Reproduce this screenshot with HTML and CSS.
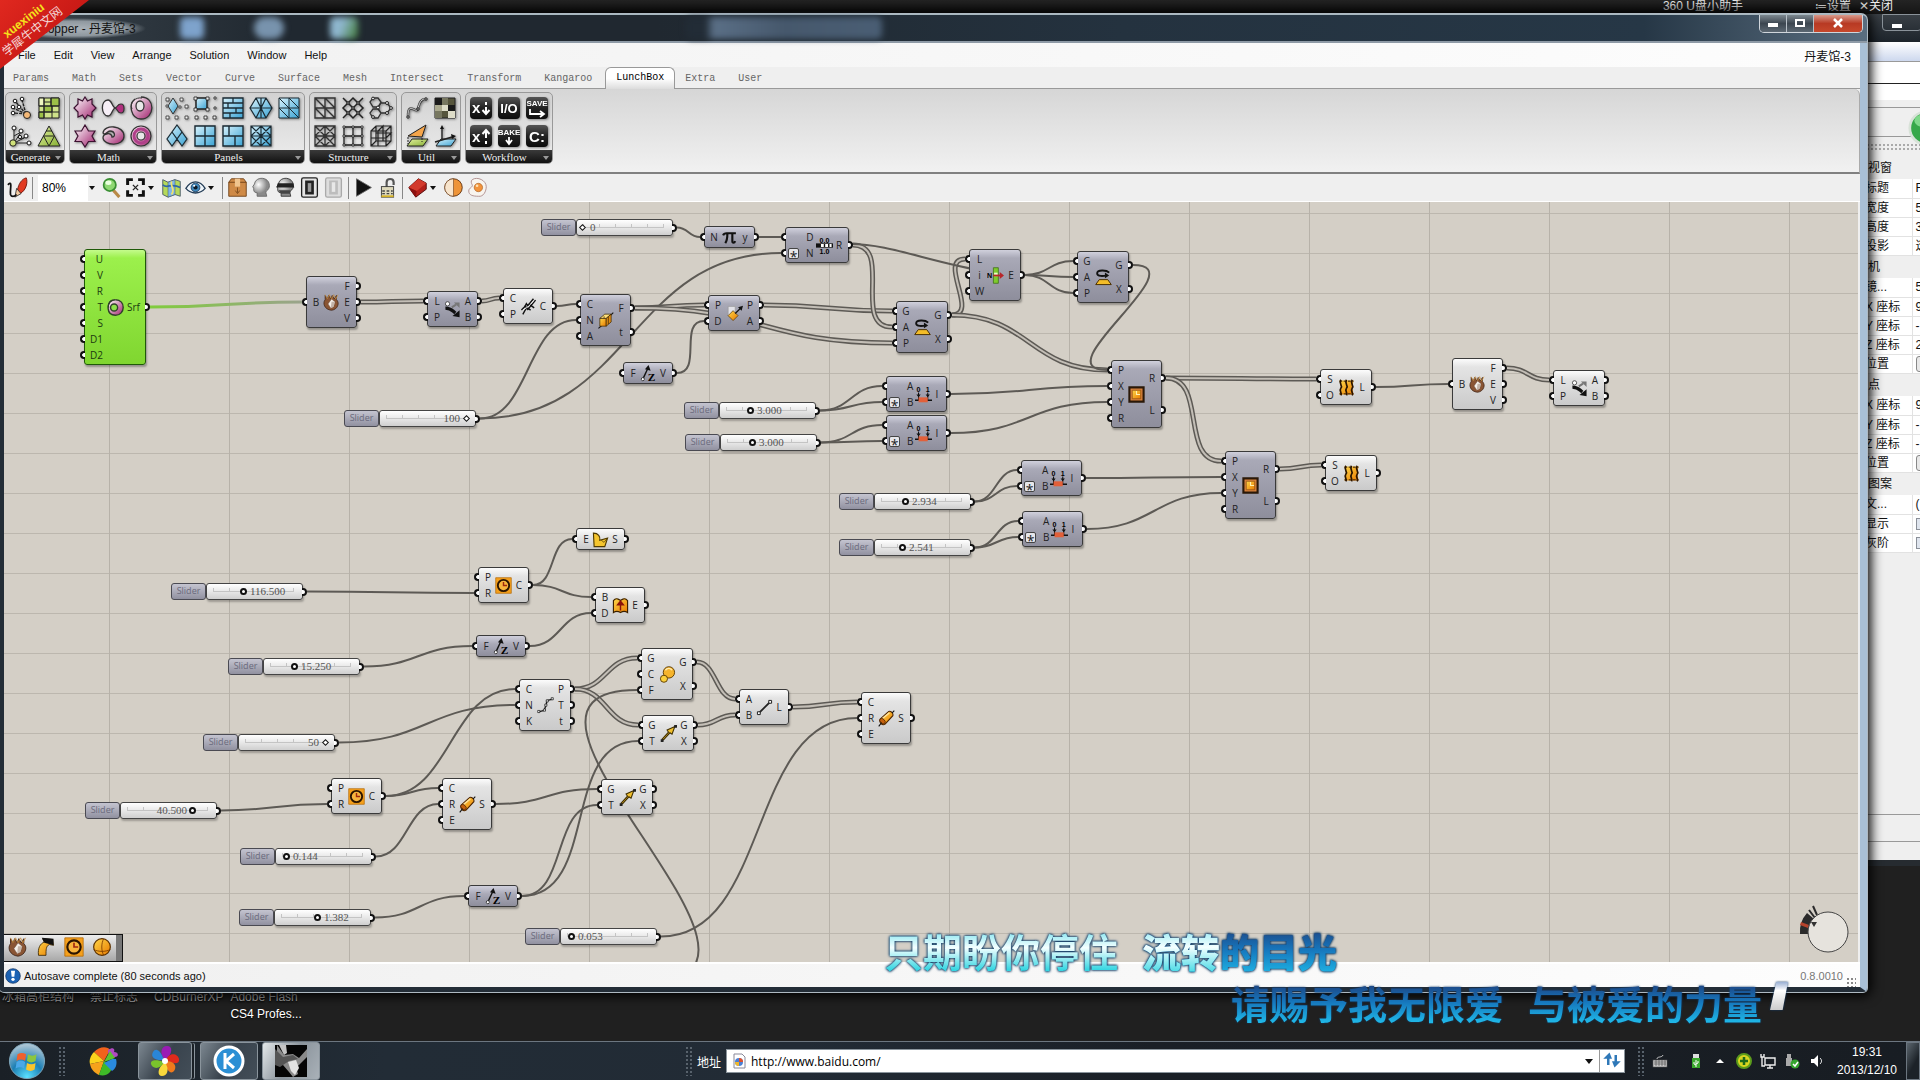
FILE: index.html
```html
<!DOCTYPE html>
<html lang="zh-CN">
<head>
  <meta charset="UTF-8">
  <meta name="viewport" content="width=device-width, initial-scale=1.0">
  <title>Grasshopper - 丹麦馆-3</title>
  <link rel="stylesheet" href="styles.css">
</head>
<body>
  <!-- Icon sprite -->
  <svg class="sprite" aria-hidden="true">
    <defs>
      <linearGradient id="gPink" x1="0" y1="0" x2="1" y2="1"><stop offset="0" stop-color="#fff"/><stop offset="1" stop-color="#a0206c"/></linearGradient>
      <linearGradient id="gBlue" x1="0" y1="0" x2="1" y2="1"><stop offset="0" stop-color="#d8f2fc"/><stop offset="1" stop-color="#3aa3d4"/></linearGradient>
      <linearGradient id="gGreen" x1="0" y1="0" x2="1" y2="1"><stop offset="0" stop-color="#e4f0a0"/><stop offset="1" stop-color="#86b034"/></linearGradient>
      <linearGradient id="gOrange" x1="0" y1="0" x2="1" y2="1"><stop offset="0" stop-color="#ffd84a"/><stop offset="1" stop-color="#e87a00"/></linearGradient>
      <linearGradient id="gBlack" x1="0" y1="0" x2="0" y2="1"><stop offset="0" stop-color="#555"/><stop offset=".5" stop-color="#222"/><stop offset="1" stop-color="#0c0c0c"/></linearGradient>
      <radialGradient id="gHead" cx=".35" cy=".35"><stop offset="0" stop-color="#fff"/><stop offset="1" stop-color="#8a8a8a"/></radialGradient>
      <radialGradient id="gOrb" cx=".5" cy=".95" r=".9"><stop offset="0" stop-color="#5be2ff"/><stop offset=".5" stop-color="#1c7fb4"/><stop offset="1" stop-color="#a9c4d4"/></radialGradient>
    </defs>

    <!-- Generate -->
    <symbol id="i-gen1" viewBox="0 0 24 24"><path d="M17 18L6 5M17 18L13 4M17 18L4 12M17 18L5 17" stroke="#222" stroke-width="1.400" stroke-dasharray="3 1" fill="none"/><g fill="#fff" stroke="#111"><circle cx="6" cy="5" r="1.800"/><circle cx="13" cy="3" r="1.800"/><circle cx="4" cy="11" r="1.800"/><circle cx="4" cy="17" r="1.800"/><circle cx="10" cy="11" r="1.800"/></g><circle cx="18" cy="19" r="3.500" fill="#f4b877" stroke="#222"/></symbol>
    <symbol id="i-gen2" viewBox="0 0 24 24"><g stroke="#222"><path fill="#cfe28a" d="M2 2h20v20H2z"/><path fill="#9cc048" d="M14 2h8v8h-8zM7 10h8v6H7zM2 16h5v6H2z"/><path fill="#eef6c0" d="M2 2h5v8H2z"/><path fill="none" d="M7 2v20M14 2v8M2 10h20M15 10v12M2 16h20M7 6h7"/></g></symbol>
    <symbol id="i-gen3" viewBox="0 0 24 24"><path d="M5 19L5 4M5 19L12 8M5 19L19 12M5 19L20 19M5 12l7-4M12 15l7-3" stroke="#222" fill="none"/><g fill="#fff" stroke="#111"><circle cx="5" cy="4" r="2"/><circle cx="12" cy="7" r="2"/><circle cx="17" cy="12" r="2"/><circle cx="20" cy="19" r="2"/><circle cx="11" cy="13" r="1.600"/></g><circle cx="4" cy="19" r="3.200" fill="#cfe07a" stroke="#222"/></symbol>
    <symbol id="i-gen4" viewBox="0 0 24 24"><path d="M12 2L23 22H1z" fill="url(#gGreen)" stroke="#222"/><path d="M6.500 12h11L12 22zM9 7h6" fill="none" stroke="#222"/></symbol>
    <!-- Math -->
    <symbol id="i-math1" viewBox="0 0 24 24"><path d="M12 1l2.500 4L19 3v5l4 4-4 4v5l-4.500-2L12 23l-2.500-4L5 21v-5l-4-4 4-4V3l4.500 2z" fill="url(#gPink)" stroke="#3c1030" stroke-width="1.200"/></symbol>
    <symbol id="i-math2" viewBox="0 0 24 24"><path d="M14 12c-3-1-3-8-7-8-8 0-7 16 0 16 4 0 4-7 7-8z" fill="#f6eef6" stroke="#333" stroke-width="1.300"/><path d="M14 12c3-1 2-4 6-4s4 9 0 9-3-4-6-5z" fill="#b0307e" stroke="#333" stroke-width="1.200"/></symbol>
    <symbol id="i-math3" viewBox="0 0 24 24"><path d="M12 1c15 0 14 22 0 22C2 23-1 8 6 3" fill="url(#gPink)" stroke="#333" stroke-width="1.300"/><path d="M3 13C0 6 7 1 13 2" fill="none" stroke="#333"/><ellipse cx="11" cy="10" rx="4" ry="5" fill="#e8e8e8" stroke="#333" stroke-width="1.300"/></symbol>
    <symbol id="i-math4" viewBox="0 0 24 24"><path d="M12 1l3.500 6h6.500l-3 5 3 5.500h-6.500L12 23l-3.500-5.500H2L5 12 2 7h6.500z" fill="url(#gPink)" stroke="#3c1030" stroke-width="1.200"/></symbol>
    <symbol id="i-math5" viewBox="0 0 24 24"><path d="M2 9C3 0 23 1 23 12S3 22 2 14c0-5 9-6 9-1 4 0 3-6-2-6-3 0-5 5-7 2z" fill="url(#gPink)" stroke="#333" stroke-width="1.300"/></symbol>
    <symbol id="i-math6" viewBox="0 0 24 24"><circle cx="12" cy="12" r="10" fill="url(#gPink)" stroke="#333" stroke-width="1.200"/><circle cx="12" cy="12" r="7" fill="none" stroke="#b0408a" stroke-width="3"/><circle cx="12" cy="12" r="4" fill="#e8e8e8" stroke="#333" stroke-width="1.200"/></symbol>
    <!-- Panels -->
    <symbol id="i-pan1" viewBox="0 0 24 24"><path d="M8 2l5 8-5 8-5-8z" fill="url(#gBlue)" stroke="#333"/><path d="M1 2h3v3H1zM15 2h3v3h-3zM20 9h3v3h-3zM1 20h3v3H1zM10 20h3v3h-3zM20 20h3v3h-3zM1 9h2v2H1zM14 10h2v2h-2z" fill="#eee" stroke="#333" stroke-width=".8"/></symbol>
    <symbol id="i-pan2" viewBox="0 0 24 24"><path d="M3 2h11v11H3z" fill="url(#gBlue)" stroke="#222" stroke-width="1.500"/><path d="M1 1h3v3H1zM13 1h3v3h-3zM1 12h3v3H1zM13 12h3v3h-3zM21 1h2v2h-2zM21 11h2v2h-2zM2 20h3v3H2zM11 20h3v3h-3zM20 20h3v3h-3z" fill="#eee" stroke="#222" stroke-width=".8"/></symbol>
    <symbol id="i-pan3" viewBox="0 0 24 24"><path d="M2 2h20v20H2z" fill="url(#gBlue)"/><path d="M2 2h20v20H2zM2 7h20M2 12h20M2 17h20M12 2v5M7 7v5M15 12v5M9 17v5" fill="none" stroke="#1a2a33" stroke-width="1.300"/></symbol>
    <symbol id="i-pan4" viewBox="0 0 24 24"><path d="M7 2h10l6 10-6 10H7L1 12z" fill="url(#gBlue)"/><path d="M7 2h10l6 10-6 10H7L1 12zM1 12h22M7 2l10 20M17 2L7 22M12 2v20" fill="none" stroke="#1a2a33" stroke-width="1.200"/></symbol>
    <symbol id="i-pan5" viewBox="0 0 24 24"><path d="M2 2h20v20H2z" fill="url(#gBlue)"/><path d="M2 2h20v20H2zM12 2v20M2 2l20 20M2 12l10 10M12 2l10 10M2 12h20" fill="none" stroke="#1a2a33"/></symbol>
    <symbol id="i-pan6" viewBox="0 0 24 24"><path d="M12 1l5 7 5 6-5 8-5-7-5 7-5-8 5-6z" fill="url(#gBlue)"/><path d="M12 1l5 7-5 7-5-7zM7 8l5 7-5 7-5-7zM17 8l5 7-5 7-5-7z" fill="none" stroke="#1a2a33" stroke-width="1.200"/></symbol>
    <symbol id="i-pan7" viewBox="0 0 24 24"><path d="M2 2h20v20H2z" fill="url(#gBlue)"/><path d="M2 2h20v20H2zM12 2v20M2 12h20" fill="none" stroke="#1a2a33" stroke-width="1.400"/></symbol>
    <symbol id="i-pan8" viewBox="0 0 24 24"><path d="M2 2h20v20H2z" fill="url(#gBlue)"/><path d="M2 2h20v20H2zM8 2v10M2 12h20M14 12v10" fill="none" stroke="#1a2a33" stroke-width="1.400"/></symbol>
    <symbol id="i-pan9" viewBox="0 0 24 24"><path d="M2 2h20v20H2z" fill="url(#gBlue)"/><path d="M2 2h20v20H2zM12 2v20M2 12h20M2 2l20 20M22 2L2 22M12 2l10 10-10 10L2 12z" fill="none" stroke="#1a2a33" stroke-width="1.200"/></symbol>
    <!-- Structure -->
    <symbol id="i-str1" viewBox="0 0 24 24"><path d="M2 2h20v20H2zM12 2v20M2 12h20M2 2l20 20M2 12l10 10M12 2l10 10" fill="none" stroke="#333" stroke-width="1.400"/></symbol>
    <symbol id="i-str2" viewBox="0 0 24 24"><path d="M2 2l20 20M22 2L2 22M12 2l10 10-10 10L2 12z" fill="none" stroke="#222" stroke-width="1.500"/><path d="M6 6h2v2H6zM16 6h2v2h-2zM11 11h2v2h-2zM6 16h2v2H6zM16 16h2v2h-2z" fill="#eee" stroke="#222"/></symbol>
    <symbol id="i-str3" viewBox="0 0 24 24"><path d="M4 2h5l3 4-3 5H4L1 6zM12 7h6l4 5-4 5h-6l-3-5zM4 13h5l3 4-3 5H4l-3-5z" fill="none" stroke="#333" stroke-width="1.300"/><g fill="#eee" stroke="#222"><circle cx="4" cy="2.500" r="1.400"/><circle cx="9" cy="11.500" r="1.500"/><circle cx="18" cy="7" r="1.500"/><circle cx="22" cy="12" r="1.400"/><circle cx="4" cy="21" r="1.400"/><circle cx="18" cy="17" r="1.500"/></g></symbol>
    <symbol id="i-str4" viewBox="0 0 24 24"><path d="M2 2h20v20H2zM12 2v20M2 12h20M2 2l20 20M22 2L2 22M12 2l10 10-10 10L2 12z" fill="none" stroke="#333" stroke-width="1.300"/></symbol>
    <symbol id="i-str5" viewBox="0 0 24 24"><path d="M3 3h18v18H3zM12 3v18M3 12h18" fill="none" stroke="#222" stroke-width="1.300"/><path d="M2 2h2v2H2zM11 2h2v2h-2zM20 2h2v2h-2zM2 11h2v2H2zM11 11h2v2h-2zM20 11h2v2h-2zM2 20h2v2H2zM11 20h2v2h-2zM20 20h2v2h-2z" fill="#eee" stroke="#222" stroke-width=".8"/></symbol>
    <symbol id="i-str6" viewBox="0 0 24 24"><path d="M2 7h15v15H2zM9 7v15M2 14h15M2 7l5-5h15v15l-5 5M17 7l5-5M9 7l5-5v15M17 14l5-5H7V2M7 9v8h15M2 22l5-5" fill="none" stroke="#222" stroke-width="1.200"/></symbol>
    <!-- Util -->
    <symbol id="i-utl1" viewBox="0 0 24 24"><path d="M3 20c0-14 7-4 9-6s2-12 9-11" fill="none" stroke="#444" stroke-width="2.500"/><path d="M3 20c0-14 7-4 9-6s2-12 9-11" fill="none" stroke="#eee" stroke-width=".8"/><path d="M2 20h2v2H2zM20 2h2v2h-2zM12 12h2v2h-2z" fill="#fff" stroke="#222"/></symbol>
    <symbol id="i-utl2" viewBox="0 0 24 24"><path d="M2 2h20v20H2z" fill="#56553c" stroke="#222"/><path d="M2 2h7v7H2zM15 9h7v6h-7z" fill="#1a1a1a"/><path d="M9 2h6v7H9zM2 15h7v7H2z" fill="#777760"/><path d="M9 9h6v6H9zM15 15h7v7h-7z" fill="#dddcc8"/><path d="M2 9h7v6H2z" fill="#aaa98e"/></symbol>
    <symbol id="i-utl3" viewBox="0 0 24 24"><path d="M2 22l5-7h16l-5 7z" fill="url(#gGreen)" stroke="#222"/><path d="M3 12L21 1l-4 12z" fill="#f5a54a" stroke="#222"/><path d="M3 13v7M17 14v4" stroke="#222" stroke-dasharray="2 1"/></symbol>
    <symbol id="i-utl4" viewBox="0 0 24 24"><path d="M3 22l5-7h15l-5 7z" fill="url(#gBlue)" stroke="#222"/><path d="M9 16V4M9 16l10-3M9 16l-7 2" fill="none" stroke="#222" stroke-width="1.400"/><path d="M7 5l2-4 2 4zM18 10l5 2-4 3z" fill="#111"/></symbol>
    <!-- Workflow -->
    <symbol id="i-wf1" viewBox="0 0 24 24"><rect x="1" y="1" width="22" height="22" rx="4" fill="url(#gBlack)"/><text x="3" y="17" class="wf-text wf-big">x</text><path d="M17 6v3M17 11v6M13.500 14l3.500 4 3.500-4" fill="none" stroke="#fff" stroke-width="2"/></symbol>
    <symbol id="i-wf2" viewBox="0 0 24 24"><rect x="1" y="1" width="22" height="22" rx="4" fill="url(#gBlack)"/><text x="12" y="17" text-anchor="middle" class="wf-text wf-mid">I/O</text></symbol>
    <symbol id="i-wf3" viewBox="0 0 24 24"><rect x="1" y="1" width="22" height="22" rx="4" fill="url(#gBlack)"/><text x="12" y="10" text-anchor="middle" class="wf-text wf-small">SAVE</text><path d="M5 13v5h13M15 15l4 3-4 3" fill="none" stroke="#fff" stroke-width="1.800"/></symbol>
    <symbol id="i-wf4" viewBox="0 0 24 24"><rect x="1" y="1" width="22" height="22" rx="4" fill="url(#gBlack)"/><text x="3" y="18" class="wf-text wf-big">x</text><path d="M17 20v-3M17 14V7M13.500 10l3.500-4 3.500 4" fill="none" stroke="#fff" stroke-width="2"/></symbol>
    <symbol id="i-wf5" viewBox="0 0 24 24"><rect x="1" y="1" width="22" height="22" rx="4" fill="url(#gBlack)"/><text x="12" y="11" text-anchor="middle" class="wf-text wf-small">BAKE</text><path d="M12 13v6M9 16l3 4 3-4" fill="none" stroke="#fff" stroke-width="1.800"/></symbol>
    <symbol id="i-wf6" viewBox="0 0 24 24"><rect x="1" y="1" width="22" height="22" rx="4" fill="url(#gBlack)"/><text x="12" y="18" text-anchor="middle" class="wf-text wf-big">C:</text></symbol>

    <!-- Toolbar -->
    <symbol id="i-pen" viewBox="0 0 24 24"><path d="M12 15C13 8 17 2 22 1c2 5 0 14-7 18z" fill="#e23a22" stroke="#6a1008"/><path d="M11 13l5 6-7 4z" fill="#f2c9a0" stroke="#333"/><path d="M1 9c6-6 2 6 3 11 1 3 4 3 7 0" fill="none" stroke="#111" stroke-width="2"/></symbol>
    <symbol id="i-mag" viewBox="0 0 24 24"><path d="M14 15l7 8" stroke="#b98a48" stroke-width="3.500"/><circle cx="10" cy="9" r="7" fill="#8fd873" stroke="#3b8f34" stroke-width="2"/><ellipse cx="8.500" cy="6.500" rx="3.500" ry="2.500" fill="#eaffdf"/></symbol>
    <symbol id="i-extents" viewBox="0 0 24 24"><path d="M3 9V3h6M15 3h6v6M21 15v6h-6M9 21H3v-6" fill="none" stroke="#111" stroke-width="3.400"/><path d="M9 9l6 6M15 9l-6 6" stroke="#222" stroke-width="1.500"/></symbol>
    <symbol id="i-map" viewBox="0 0 24 24"><path d="M2 3l6 3 8-3 6 2v17l-6-2-8 3-6-3z" fill="#b5d95a" stroke="#456"/><path d="M8 6l8-3v17l-8 3z" fill="#7fb6e8" stroke="#456" stroke-width=".6"/><path d="M2 9c6 5 9-3 20 3" stroke="#2f67a8" stroke-width="2" fill="none"/><path d="M12 5c-2 7 5 8 0 15" stroke="#f0e26c" stroke-width="2" fill="none"/></symbol>
    <symbol id="i-eye" viewBox="0 0 24 24"><path d="M1 13c6-10 16-10 22 0-6 7-16 7-22 0z" fill="#eef5fa" stroke="#223b55" stroke-width="1.500"/><circle cx="12" cy="12" r="5" fill="#4187bb" stroke="#1d3c5a"/><circle cx="12" cy="12" r="2.400" fill="#0c1a28"/><circle cx="10.500" cy="10" r="1.200" fill="#fff"/></symbol>
    <symbol id="i-crate" viewBox="0 0 24 24"><path d="M2 6l3-4h14l3 4v16H2z" fill="#cf8a47" stroke="#6b3d14"/><path d="M2 6h20" stroke="#6b3d14"/><path d="M9 2h6v9H9z" fill="#f0c48e"/><path d="M12 12v6M9.500 15.500L12 19l2.500-3.500" stroke="#7a4a1c" fill="none"/></symbol>
    <symbol id="i-head" viewBox="0 0 24 24"><path d="M7 22v-4c-4 0-4-3-4-5L2 11l2-3c1-9 17-9 17 2 0 5-4 5-4 8l1 4z" fill="url(#gHead)" stroke="#666"/></symbol>
    <symbol id="i-ninja" viewBox="0 0 24 24"><path d="M7 22v-4c-4 0-4-3-4-5L2 11l2-3c1-9 17-9 17 2 0 5-4 5-4 8l1 4z" fill="url(#gHead)" stroke="#333"/><path d="M3 7h18l1 5H2z" fill="#222"/><path d="M4 15h14l-1 4H7z" fill="#444"/></symbol>
    <symbol id="i-btn1" viewBox="0 0 24 24"><rect x="3" y="1" width="18" height="22" rx="2" fill="#e4e4e4" stroke="#222" stroke-width="1.500"/><rect x="7" y="4" width="10" height="16" fill="#222"/><rect x="10" y="7" width="4" height="10" fill="#999"/></symbol>
    <symbol id="i-btn2" viewBox="0 0 24 24"><rect x="3" y="1" width="18" height="22" rx="2" fill="#ddd" stroke="#aaa" stroke-width="1.500"/><rect x="7" y="4" width="10" height="16" fill="#bdbdbd"/><rect x="10" y="6" width="4" height="11" fill="#e8e8e8"/></symbol>
    <symbol id="i-play" viewBox="0 0 24 24"><path d="M4 2l17 10L4 22z" fill="#111" stroke="#666"/></symbol>
    <symbol id="i-lock" viewBox="0 0 24 24"><path d="M11 12V6c0-5 8-5 8 0v3" fill="none" stroke="#555" stroke-width="2.500"/><rect x="5" y="11" width="14" height="12" fill="#ded9bc" stroke="#333"/><path d="M6 16h12M6 19h12" stroke="#444" stroke-width="1.500" stroke-dasharray="3 2"/><path d="M5 22h14" stroke="#d6b324" stroke-width="2"/></symbol>
    <symbol id="i-gem" viewBox="0 0 24 24"><path d="M2 12L13 2l9 5v7L10 23z" fill="#b3201a" stroke="#4a0808"/><path d="M2 12L13 2l9 5-11 9z" fill="#d23a2c"/><path d="M11 16l-1 7L2 12z" fill="#8c100f"/></symbol>
    <symbol id="i-sphere" viewBox="0 0 24 24"><circle cx="12" cy="12" r="10" fill="#ee9438" stroke="#5a2d0a"/><path d="M12 2a10 10 0 000 20z" fill="#f7e4cc" stroke="#5a2d0a" stroke-width=".6"/></symbol>
    <symbol id="i-egg" viewBox="0 0 24 24"><path d="M6 3c6-4 16 1 16 8 0 5-3 12-9 11-6 0-11-1-11-6 0-4 5-4 4-7-1-2-2-4 0-6z" fill="#f8f4ee" stroke="#a88"/><circle cx="13" cy="12" r="4.800" fill="#f2933c" stroke="#a55a1c" stroke-width=".7"/><circle cx="11.500" cy="10" r="1.500" fill="#ffe2b4"/></symbol>

    <!-- Components -->
    <symbol id="n-torus" viewBox="0 0 24 24"><path d="M12 1c15 0 14 22 0 22C-2 23 0 5 7 2" fill="url(#gPink)" stroke="#31402a" stroke-width="2"/><path d="M2 12C1 5 6 1 12 1" fill="none" stroke="#31402a" stroke-width="2"/><circle cx="10" cy="12" r="5" fill="#8de04a" stroke="#31402a" stroke-width="2"/></symbol>
    <symbol id="n-brep" viewBox="0 0 24 24"><path d="M3 2l3 5 2-5 3 5 2-5 3 5 3-5v6c5 4 2 14-7 15C2 22-1 13 3 8z" fill="#8a5534" stroke="#3b2114"/><path d="M3 1l3 6 3-6 3 6 3-6 3 6 3-6" stroke="#c88c3c" fill="none"/><path d="M12 7l5 4-2 7-4 2-4-6z" fill="#f4efe8" stroke="#6a4a3a" stroke-width=".7"/><path d="M12 11l5 0-2 7-4 2z" fill="#c4b4a8"/></symbol>
    <symbol id="n-dispatch" viewBox="0 0 24 24"><path d="M2 10c8 0 9 3 14 7" stroke="#111" stroke-width="4.500" fill="none"/><path d="M22 13v10l-10-2z" fill="#111"/><path d="M11 9l6-4" stroke="#777" stroke-width="3"/><path d="M14 2h8v8z" fill="#777"/><circle cx="5" cy="4" r="3" fill="#fff" stroke="#222"/></symbol>
    <symbol id="n-join" viewBox="0 0 24 24"><path d="M4 23L9 14l2 2L22 3M2 17l5-5 2-4 2 3 8-10M12 8l8 6M6 11l9 6" stroke="#111" stroke-width="2" fill="none"/><path d="M4 17l8-5 7-8" stroke="#fff" stroke-width="1.200" fill="none"/></symbol>
    <symbol id="n-frames" viewBox="0 0 24 24"><path d="M2 23l6-5M17 7l6-6" stroke="#111" stroke-width="1.500"/><path d="M4 9h9v11H4z" fill="url(#gOrange)" stroke="#3a2500"/><path d="M4 9l7-6h9l-7 6z" fill="#ffe07a" stroke="#3a2500"/><path d="M13 9l7-6v11l-7 6z" fill="#e08c14" stroke="#3a2500"/><path d="M10 6v3M16 7v10" stroke="#3a2500"/></symbol>
    <symbol id="n-pi" viewBox="0 0 24 24"><path d="M3 9c1-3 3-3 5-3h13M9 7c0 6-1 10-3 13M16 7v10c0 3 3 3 4 0" fill="none" stroke="#111" stroke-width="3"/></symbol>
    <symbol id="n-range" viewBox="0 0 24 24"><text x="12" y="8" text-anchor="middle" class="num-text">0.0</text><path d="M0 9h24v6H0z" fill="#111"/><path d="M7 10h4v4H7zM13 10h4v4h-4zM19 10h3v4h-3z" fill="#fff"/><text x="12" y="24" text-anchor="middle" class="num-text">1.0</text></symbol>
    <symbol id="n-plane" viewBox="0 0 24 24"><path d="M3 2h10v13H3z" fill="#e2e2e8" stroke="#999"/><path d="M10 8l7 7-7 7-7-7z" fill="url(#gOrange)" stroke="#5a3600"/><path d="M13 12l8-8" stroke="#111" stroke-width="1.800"/><path d="M24 1l-7 2 5 5z" fill="#111"/></symbol>
    <symbol id="n-zvec" viewBox="0 0 24 24"><path d="M4 20L11 5" stroke="#111" stroke-width="2"/><path d="M12 0l3 8-8-2z" fill="#111"/><circle cx="4" cy="20" r="2.200" fill="#fff" stroke="#111"/><text x="11" y="23" class="z-text">Z</text></symbol>
    <symbol id="n-rotate" viewBox="0 0 24 24"><path d="M20 5C16 1 3 1 3 6s9 4 14 3" fill="none" stroke="#111" stroke-width="2.600"/><path d="M14 5l6 4-6 4z" fill="#111"/><path d="M6 15h12l5 7H1z" fill="#f4bd28" stroke="#4a3000" stroke-width="1.400"/></symbol>
    <symbol id="n-item" viewBox="0 0 24 24"><path d="M9 1h7v22H9z" fill="#7ecb2c" stroke="#37670f"/><path d="M10 8h5v5h-5z" fill="#eaffc8"/><path d="M9 12h11" stroke="#b8262a" stroke-width="2.500"/><path d="M18 7l6 5-6 5z" fill="#b8262a"/><text x="0" y="16" class="n-text">N</text></symbol>
    <symbol id="n-domain" viewBox="0 0 24 24"><text x="2" y="8" class="num-text">0</text><text x="15" y="8" class="num-text">1</text><path d="M5 9v11M18 9v11" stroke="#111" stroke-width="1.500"/><path d="M2 12h6l-3 4zM15 12h6l-3 4zM0 19h24v2H0z" fill="#111"/><path d="M5 16h13v7H5z" fill="#e2603a"/></symbol>
    <symbol id="n-rect" viewBox="0 0 24 24"><path d="M2 2h20v20H2z" fill="#d8823c" stroke="#2a1808" stroke-width="3"/><path d="M6 6h12v12H6z" fill="url(#gOrange)" stroke="#8a4a10"/><path d="M12 7v5h5" fill="none" stroke="#fff1b0" stroke-width="1.500"/></symbol>
    <symbol id="n-loft" viewBox="0 0 24 24"><path d="M2 2h20l-2 10 2 10H2l2-10z" fill="url(#gOrange)"/><path d="M4 1c-4 7 4 8 0 12 -3 4 2 6 0 10M12 1c-4 7 4 8 0 12 -3 4 2 6 0 10M20 1c-4 7 4 8 0 12 -3 4 2 6 0 10" fill="none" stroke="#2a1400" stroke-width="2.400"/><path d="M2 3h20M2 21h20" stroke="#2a1400" stroke-width="1.400" stroke-dasharray="4 2"/></symbol>
    <symbol id="n-bound" viewBox="0 0 24 24"><path d="M2 3c7 0 10 5 9 10l11-3-4 12H3z" fill="#f5c52e" stroke="#4f3a00" stroke-width="1.600"/><path d="M13 13l4 3 5-6" fill="none" stroke="#4f3a00"/></symbol>
    <symbol id="n-circle" viewBox="0 0 24 24"><path d="M1 1h22v22H1z" fill="#f5a01c" stroke="#b36a08"/><circle cx="12" cy="12" r="8" fill="#f8b43c" stroke="#2a1400" stroke-width="2.600"/><path d="M12 7v5h5" fill="none" stroke="#a02810" stroke-width="2"/></symbol>
    <symbol id="n-extr" viewBox="0 0 24 24"><path d="M2 5c4-5 7-2 10 0 3-2 6-5 10 0v17c-4-3-7-2-10 0-3-2-6-3-10 0z" fill="url(#gOrange)" stroke="#3a2000" stroke-width="1.600"/><path d="M12 19V8M8 11l4-5 4 5z" stroke="#8c1208" stroke-width="2" fill="#8c1208"/></symbol>
    <symbol id="n-divide" viewBox="0 0 24 24"><path d="M2 21l8-2 3-8 1-6 8-2" fill="none" stroke="#222" stroke-width="2"/><path d="M1 19h3v3H1zM9 17h3v3H9zM11 10h3v3h-3zM13 4h3v3h-3zM20 1h3v3h-3z" fill="#fff" stroke="#111"/></symbol>
    <symbol id="n-scale" viewBox="0 0 24 24"><circle cx="14" cy="9" r="8" fill="#f6b42c" stroke="#5a3a00" stroke-width="1.300"/><path d="M9 6c3-4 8-3 9 0" stroke="#ffeab0" stroke-width="2" fill="none"/><circle cx="7" cy="18" r="5" fill="#fbd03c" stroke="#5a3a00" stroke-width="1.300"/></symbol>
    <symbol id="n-move" viewBox="0 0 24 24"><path d="M3 20l9-10-2-3 11-5-4 11-3-2-9 10z" fill="#f0bf2c" stroke="#3f2e00" stroke-width="1.500"/><path d="M1 20h4v4H1zM20 0h4v4h-4z" fill="#222"/></symbol>
    <symbol id="n-line" viewBox="0 0 24 24"><path d="M4 20L20 4" stroke="#222" stroke-width="2.600"/><path d="M2 18h4v4H2zM18 2h4v4h-4z" fill="#fff" stroke="#222" stroke-width="1.400"/></symbol>
    <symbol id="n-pipe" viewBox="0 0 24 24"><path d="M3 13L14 3c3-3 8 1 7 5L10 20c-4 3-9-3-7-7z" fill="url(#gOrange)" stroke="#4a2200" stroke-width="1.500"/><path d="M5 13L16 4" stroke="#ffe29a" stroke-width="2"/><ellipse cx="6.500" cy="16" rx="3" ry="4.500" transform="rotate(-45 6 16)" fill="#c4600e" stroke="#4a2200"/><path d="M1 23l4-5M20 4l3-3" stroke="#111" stroke-width="1.600"/></symbol>
    <symbol id="n-sweep" viewBox="0 0 24 24"><path d="M3 22c-1-9 2-14 7-16L8 2l12 1 1 7-5-1c-4 2-4 6-4 13z" fill="url(#gOrange)" stroke="#3a2500"/><path d="M7 1l14 1v8L10 7z" fill="#111"/></symbol>
    <symbol id="n-ball" viewBox="0 0 24 24"><circle cx="12" cy="12" r="10" fill="url(#gOrange)" stroke="#5a3000" stroke-width="1.400"/><path d="M2 15c6 3 14 3 20 0M14 2c-3 6-3 14 0 20" fill="none" stroke="#7a3a00"/></symbol>
    <symbol id="i-info" viewBox="0 0 24 24"><circle cx="12" cy="12" r="11" fill="#1b62b4" stroke="#0c2e5c"/><path d="M9 4h6l-1 9h-4z" fill="#fff"/><circle cx="12" cy="17" r="2.500" fill="#fff"/></symbol>
  </svg>

  <!-- Desktop -->
  <main class="desktop">
    <div class="desktop-top">
      <span>360 U盘小助手</span>
      <a href="#">≔设置</a>
      <a href="#">✕关闭</a>
    </div>

    <div class="desktop-icons">
      <a href="#">冰箱高柜结构</a>
      <a href="#">禁止标志</a>
      <a href="#">CDBurnerXP</a>
      <a href="#">Adobe Flash<br><b>CS4 Profes...</b></a>
    </div>

    <!-- Properties window behind -->
    <section class="side-window">
      <div class="side-title"><button type="button" aria-label="最小化"></button></div>
      <div class="side-band"></div>
      <div class="side-input"></div>
      <div class="side-tools"><svg viewBox="0 0 40 40"><circle cx="20" cy="20" r="18" fill="#36a84a" stroke="#d8e2d8" stroke-width="3"/><ellipse cx="18" cy="12" rx="11" ry="7" fill="#7fd88a"/></svg></div>
      <div class="side-dots"></div>
      <table class="props">
        <colgroup><col class="col-name"><col></colgroup>
        <tbody>
          <tr class="group"><th colspan="2">视窗</th></tr>
          <tr><th>标题</th><td>F</td></tr>
          <tr><th>宽度</th><td>5</td></tr>
          <tr><th>高度</th><td>3</td></tr>
          <tr><th>投影</th><td>透</td></tr>
          <tr class="group"><th colspan="2">机</th></tr>
          <tr><th>镜...</th><td>5</td></tr>
          <tr><th>X 座标</th><td>9</td></tr>
          <tr><th>Y 座标</th><td>-</td></tr>
          <tr><th>Z 座标</th><td>2</td></tr>
          <tr><th>位置</th><td><button type="button" aria-label="放置"></button></td></tr>
          <tr class="group"><th colspan="2">点</th></tr>
          <tr><th>X 座标</th><td>9</td></tr>
          <tr><th>Y 座标</th><td>-</td></tr>
          <tr><th>Z 座标</th><td>-</td></tr>
          <tr><th>位置</th><td><button type="button" aria-label="放置"></button></td></tr>
          <tr class="group"><th colspan="2">图案</th></tr>
          <tr><th>文...</th><td>(</td></tr>
          <tr><th>显示</th><td><input type="checkbox" aria-label="显示" checked></td></tr>
          <tr><th>灰阶</th><td><input type="checkbox" aria-label="灰阶" checked></td></tr>
        </tbody>
      </table>
      <div class="side-foot"></div>
    </section>

    <!-- Grasshopper window -->
    <section class="window">
      <header class="titlebar">
        <h1>Grasshopper - 丹麦馆-3</h1>
        <div class="glass"><i class="g-doc"></i><i class="g-blue"></i><i class="g-leaf"></i><i class="g-title"></i></div>
        <div class="win-buttons">
          <button type="button" aria-label="Minimize"><svg viewBox="0 0 12 10"><path d="M1 5h10v4H1z" fill="#fff"/></svg></button>
          <button type="button" aria-label="Maximize"><svg viewBox="0 0 12 10"><path d="M2 2h8v6H2z" fill="none" stroke="#fff" stroke-width="2"/></svg></button>
          <button type="button" class="close" aria-label="Close"><svg viewBox="0 0 12 10"><path d="M2 1l8 8M10 1L2 9" stroke="#fff" stroke-width="2.500"/></svg></button>
        </div>
      </header>

      <nav class="menubar">
        <a href="#">File</a><a href="#">Edit</a><a href="#">View</a><a href="#">Arrange</a><a href="#">Solution</a><a href="#">Window</a><a href="#">Help</a>
        <span class="doc-name">丹麦馆-3</span>
      </nav>

      <nav class="tabs">
        <a href="#">Params</a><a href="#">Math</a><a href="#">Sets</a><a href="#">Vector</a><a href="#">Curve</a><a href="#">Surface</a><a href="#">Mesh</a><a href="#">Intersect</a><a href="#">Transform</a><a href="#">Kangaroo</a><a href="#" class="active">LunchBox</a><a href="#">Extra</a><a href="#">User</a>
      </nav>

      <div class="ribbon" id="ribbon"></div>

      <div class="toolbar">
        <button type="button" aria-label="Sketch"><svg><use href="#i-pen"/></svg></button>
        <span class="sep"></span>
        <span class="zoom"><select aria-label="Zoom"><option>80%</option></select></span>
        <button type="button" aria-label="Zoom extents"><svg><use href="#i-mag"/></svg></button>
        <button type="button" aria-label="Focus" class="drop"><svg><use href="#i-extents"/></svg></button>
        <button type="button" aria-label="Map"><svg><use href="#i-map"/></svg></button>
        <button type="button" aria-label="Preview" class="drop"><svg><use href="#i-eye"/></svg></button>
        <span class="sep"></span>
        <button type="button" aria-label="Cluster"><svg><use href="#i-crate"/></svg></button>
        <button type="button" aria-label="Preview on"><svg><use href="#i-head"/></svg></button>
        <button type="button" aria-label="Preview off"><svg><use href="#i-ninja"/></svg></button>
        <button type="button" aria-label="Enable"><svg><use href="#i-btn1"/></svg></button>
        <button type="button" aria-label="Disable"><svg><use href="#i-btn2"/></svg></button>
        <span class="sep"></span>
        <button type="button" aria-label="Recompute"><svg><use href="#i-play"/></svg></button>
        <button type="button" aria-label="Lock solver"><svg><use href="#i-lock"/></svg></button>
        <span class="sep"></span>
        <button type="button" aria-label="Bake" class="drop"><svg><use href="#i-gem"/></svg></button>
        <button type="button" aria-label="Shaded"><svg><use href="#i-sphere"/></svg></button>
        <button type="button" aria-label="Quality"><svg><use href="#i-egg"/></svg></button>
      </div>

      <div class="canvas" id="canvas">
        <svg class="wires" id="wires"></svg>
        <div class="recent">
          <button type="button" aria-label="Brep"><svg><use href="#n-brep"/></svg></button>
          <button type="button" aria-label="Sweep"><svg><use href="#n-sweep"/></svg></button>
          <button type="button" aria-label="Circle"><svg><use href="#n-circle"/></svg></button>
          <button type="button" aria-label="Sphere"><svg><use href="#n-ball"/></svg></button>
        </div>
        <svg class="compass" viewBox="0 0 60 60">
          <path d="M5 34A28 28 0 0 1 12 13L19 19A18 18 0 0 0 14 34z" fill="#2b2b2b"/>
          <path d="M6 22l8 3-1 3-8-3z" fill="#b5432c"/>
          <path d="M14 10l6 8M18 6l4 9" stroke="#2b2b2b" stroke-width="2"/>
          <circle cx="33" cy="32" r="20" fill="#e6e3dd" stroke="#444"/>
          <path d="M16 22l6 0-3 5z" fill="#333"/>
        </svg>
      </div>

      <footer class="statusbar">
        <svg><use href="#i-info"/></svg>
        <span>Autosave complete (80 seconds ago)</span>
        <span class="version">0.8.0010</span>
        <i class="grip"></i>
      </footer>
    </section>

    <!-- Lyrics overlay -->
    <p class="lyric lyric-one"><span class="sung">只期盼你停住</span><span><b class="sung">流转</b><b>的目光</b></span></p>
    <p class="lyric lyric-two"><span>请赐予我无限爱</span><span>与被爱的力量</span><i class="mic"></i></p>

    <!-- Corner badge -->
    <div class="badge"><p><span>xuexiniu</span><br>学犀牛中文网</p></div>
  </main>

  <!-- Taskbar -->
  <footer class="taskbar">
    <button type="button" class="start" aria-label="Start">
      <svg viewBox="0 0 40 40"><circle cx="20" cy="20" r="18.500" fill="url(#gOrb)" stroke="#7fa6ba"/><path d="M10 13c3-2 6-2 9 0l-1 7c-3-2-6-2-9 0z" fill="#f0602c"/><path d="M21 13c3 2 6 2 9 0l-1 7c-3 2-6 2-9 0z" fill="#8cc63e"/><path d="M9 21c3-2 6-2 9 0l-1 7c-3-2-6-2-9 0z" fill="#4aa8e8"/><path d="M20 22c3 2 6 2 9 0l-1 7c-3 2-6 2-9 0z" fill="#fbc52c"/></svg>
    </button>
    <i class="dots"></i>
    <button type="button" class="task plain" aria-label="Pinned">
      <svg viewBox="0 0 32 32"><path d="M16 16L6 7c5-6 14-6 16-2z" fill="#f0621c"/><path d="M16 16L6 7c-4 4-5 9-4 12z" fill="#fbd21c"/><path d="M16 16L2 19c1 6 5 9 9 11z" fill="#f6a21c"/><path d="M16 16l-5 14c8 2 12-3 13-7z" fill="#3fb928"/><path d="M24 14l-8 4 8 8c5-3 5-9 4-12z" fill="#2a8ade"/><path d="M20 5c6-4 7 0 6 2 5 0 5 5 1 5-5 1-7-2-7-7z" fill="#b04ac0"/><path d="M16 17l6-11 5 7z" fill="#5cc430"/></svg>
    </button>
    <button type="button" class="task stacked" aria-label="Pictures">
      <svg viewBox="0 0 32 32"><path d="M16 15C10 9 12 1 18 1s6 8-2 14z" fill="#9a1cb4"/><path d="M17 15c4-9 12-6 13-1s-5 6-13 1z" fill="#e02a1c"/><path d="M17 16c9 0 11 6 8 10s-9-1-8-10z" fill="#f07a1c"/><path d="M16 17c5 8 2 14-3 14s-5-8 3-14z" fill="#f8d83c"/><path d="M15 17C10 26 3 23 2 19s5-5 13-2z" fill="#7ac42c"/><path d="M15 15C6 16 1 12 4 7s8-1 11 8z" fill="#2a86d8"/><circle cx="16" cy="16" r="3" fill="#fff"/></svg>
    </button>
    <button type="button" class="task" aria-label="KuGou">
      <svg viewBox="0 0 32 32"><circle cx="16" cy="16" r="14" fill="#2b8fd4" stroke="#fff" stroke-width="3"/><path d="M12 8v16M21 9l-8 7 8 7" fill="none" stroke="#fff" stroke-width="3"/></svg>
    </button>
    <button type="button" class="task current" aria-label="Rhinoceros">
      <svg viewBox="0 0 32 32"><path d="M0 0h32v32H0z" fill="#050505"/><path d="M2 0l7 10 9-1 6 4 8-9v8l-8 8-3 2 2 7-5 3-4-5-6-7-6-3z" fill="#8a8a8a"/><path d="M0 4l8 8 10-2 5 4-9 2-9 6-5-2z" fill="#555"/><path d="M4 0h7l1 8-3 2z" fill="#c4c4c4"/><path d="M13 17l8-2 3 8-4 7-4-4z" fill="#e2e2e2"/></svg>
    </button>
    <i class="dots push"></i>
    <label class="addr-label" for="address">地址</label>
    <span class="address">
      <svg viewBox="0 0 16 16"><path d="M3 1h8l3 3v11H3z" fill="#fff" stroke="#889"/><circle cx="8" cy="9" r="4" fill="#4a7fd6"/><path d="M8 5a4 4 0 014 4H8z" fill="#e0502c"/><path d="M4 9h4v4a4 4 0 01-4-4z" fill="#f0b82c"/></svg>
      <input id="address" type="text" value="http://www.baidu.com/">
      <button type="button" class="caret" aria-label="History"></button>
      <button type="button" class="go" aria-label="Refresh"><svg viewBox="0 0 16 16"><path d="M6 2L1 7h3v5h2V7h2zM10 14l5-5h-3V4h-2v5H8z" fill="#2f78b8"/></svg></button>
    </span>
    <i class="dots"></i>
    <div class="tray">
      <svg viewBox="0 0 16 16"><rect x="1" y="7" width="14" height="7" fill="#ccc" stroke="#555" stroke-width=".6"/><path d="M2 9h12M2 11h12M4 7v6M7 7v6M10 7v6M13 7v6" fill="none" stroke="#444" stroke-width=".6"/><path d="M5 6c0-3 5-1 6-4" fill="none" stroke="#ccc"/></svg>
      <svg viewBox="0 0 16 16"><path d="M5 1h6v4H5z" fill="#ddd"/><path d="M4 5h8v10H4z" fill="#39a72c"/><path d="M8 7v7M6 9v2l2 1M10 8v2l-2 1" stroke="#fff" fill="none"/></svg>
      <svg viewBox="0 0 16 16"><path d="M4 10h8L8 6z" fill="#fff"/></svg>
      <svg viewBox="0 0 16 16"><circle cx="8" cy="8" r="7" fill="#d8d620" stroke="#5c9c1c" stroke-width="2"/><path d="M8 4v8M4 8h8" stroke="#1e6a1a" stroke-width="2.500"/></svg>
      <svg viewBox="0 0 16 16"><path d="M5 5h10v7H5zM10 12v3M7 15h6M1 1v3h3V1M2 4v9h3" fill="none" stroke="#eee" stroke-width="1.400"/></svg>
      <svg viewBox="0 0 16 16"><path d="M3 1h4v4H3zM2 5h6v8H2z" fill="#aaa"/><circle cx="11" cy="11" r="4.500" fill="#35a52e"/><path d="M9 11l2 2 3-4" fill="none" stroke="#fff" stroke-width="1.500"/></svg>
      <svg viewBox="0 0 16 16"><path d="M3 6h3l4-4v12l-4-4H3z" fill="#fff"/><path d="M12 5c2 2 2 4 0 6" fill="none" stroke="#fff"/></svg>
    </div>
    <p class="clock">19:31<br>2013/12/10</p>
    <button type="button" class="show-desktop" aria-label="Show desktop"></button>
  </footer>

  <script src="script.js"></script>
</body>
</html>
```
FILE: styles.css
```css
/* Reset and Basic Styles */
* {
  margin: 0;
  padding: 0;
  box-sizing: border-box;
}

:root {
  --ui-font: "Liberation Sans", "Noto Sans CJK SC", sans-serif;
  --song-font: "Liberation Mono", "Noto Sans CJK SC", monospace;
  --serif-font: "Liberation Serif", "Noto Sans CJK SC", serif;
  --canvas-color: #d4cfc6;
  --line-color: #8c8c8c;
}

body {
  display: flex;
  flex-direction: column;
  height: 100vh;
  overflow: hidden;
  background: #202020;
  color: #111;
  font-family: var(--ui-font);
  font-size: 11px;
}

a {
  color: inherit;
  text-decoration: none;
}

button {
  border: 0;
  background: none;
  font: inherit;
}

.sprite {
  position: absolute;
  width: 0;
  height: 0;
}

.wf-text {
  fill: #fff;
  font-family: var(--ui-font);
  font-weight: bold;
}

.wf-big { font-size: 15px; }
.wf-mid { font-size: 13px; }
.wf-small { font-size: 8px; }

.num-text {
  font-family: var(--ui-font);
  font-weight: bold;
  font-size: 10px;
}

.z-text {
  font-family: var(--serif-font);
  font-weight: bold;
  font-size: 16px;
}

.n-text {
  font-family: var(--ui-font);
  font-weight: bold;
  font-size: 10px;
}

/* Desktop */
.desktop {
  position: relative;
  flex: 1;
  overflow: hidden;
  background: linear-gradient(#242424, #151515 14px, #202020 60px);
}

.desktop-top {
  display: flex;
  justify-content: flex-end;
  padding-right: 27px;
  gap: 8px;
  color: #f0f0f0;
  font-size: 12px;
  line-height: 13px;
}

.desktop-top span {
  margin-right: 64px;
}

.desktop-icons {
  position: absolute;
  left: 2px;
  bottom: 18px;
  display: flex;
  gap: 16px;
  color: #fff;
  font-size: 12px;
  line-height: 17px;
  text-shadow: 0 1px 2px #000;
}

.desktop-icons a {
  color: #aaa;
}

.desktop-icons a:last-child {
  margin-left: -9px;
}

.desktop-icons b {
  color: #fff;
  font-weight: normal;
}

/* Side Window */
.side-window {
  position: absolute;
  top: 14px;
  right: 0;
  bottom: 175px;
  width: 62px;
  display: flex;
  flex-direction: column;
  background: #efefef;
  border-bottom: 6px solid #262b30;
  font-size: 12px;
}

.side-title {
  height: 28px;
  padding-left: 24px;
  background: linear-gradient(#3a4046, #1d242b);
}

.side-title button {
  width: 40px;
  height: 17px;
  border: 1px solid #8a9299;
  border-radius: 0 0 4px 4px;
  background: linear-gradient(#fff, #fff) 9px 9px / 10px 4px no-repeat;
}

.side-band {
  height: 20px;
  background: linear-gradient(#fff, #cdd8ee);
  border-bottom: 1px solid #999;
}

.side-input {
  height: 38px;
  background: linear-gradient(#fff 21px, #222 21px, #222 22px, #fff 22px);
}

.side-tools {
  height: 30px;
  margin-top: 7px;
  border-top: 1px solid #999;
  border-bottom: 1px solid #999;
}

.side-tools svg {
  display: block;
  width: 38px;
  height: 36px;
  margin: 2px 0 0 49px;
}

.side-dots {
  height: 8px;
  margin: 6px 0 5px;
  background: radial-gradient(#aaa 1px, transparent 1px) 0 0 / 4px 4px;
}

.props {
  width: 78px;
  table-layout: fixed;
  border-collapse: collapse;
}

.col-name {
  width: 54px;
}

.props th,
.props td {
  height: 19px;
  background: #fff;
  border-bottom: 1px solid #e2e2e2;
  font-weight: normal;
  text-align: left;
  line-height: 12px;
  white-space: nowrap;
}

.props th {
  padding-left: 8px;
  border-right: 1px solid #e2e2e2;
}

.props tr:not(.group) th {
  padding-left: 7px;
}

.props td {
  padding-left: 3px;
}

.props .group th {
  height: 23px;
  padding-left: 10px;
  border: 0;
  background: #efefef;
}

.props td button {
  display: block;
  width: 20px;
  height: 16px;
  border: 1px solid #888;
  border-radius: 3px;
  background: #e8e8e8;
}

.props td input {
  display: block;
  appearance: none;
  width: 12px;
  height: 12px;
  border: 1px solid #8a8f98;
  background: #dfe5ee;
}

.side-foot {
  height: 28px;
  margin-top: auto;
  margin-bottom: 18px;
  border-top: 1px solid #999;
  border-bottom: 1px solid #999;
}

/* Main Window */
.window {
  position: absolute;
  top: 14px;
  left: 0;
  right: 53px;
  bottom: 49px;
  display: flex;
  flex-direction: column;
  background: #efefef;
  border: solid #232d37;
  border-width: 0 7px 5px 4px;
  border-right-color: #a9c0d6;
  border-radius: 6px 6px 4px 4px;
  box-shadow: 0 0 0 1px #aeb9c2, 0 0 12px 4px #000;
}

.titlebar {
  display: flex;
  align-items: center;
  height: 29px;
  flex: none;
  margin-right: -7px;
  padding-right: 4px;
  border-top: 1px solid #a8b8c0;
  border-bottom: 2px solid #8e9aa6;
  border-radius: 0 6px 0 0;
  background: linear-gradient(90deg, #3a444c, #202830 15%, #202830 35%, #24323f 60%, #263746 88%, #5a6e80);
}

.titlebar h1 {
  position: relative;
  z-index: 1;
  padding: 1px 10px 3px 5px;
  border-radius: 12px;
  background: radial-gradient(closest-side, #aab2b8, #8f989f 70%, transparent);
  font-size: 12px;
  font-weight: normal;
  color: #111;
}

.glass {
  display: flex;
  align-items: center;
  flex: 1;
  filter: blur(3px);
}

.glass i {
  width: 24px;
  height: 22px;
  margin-left: 34px;
  border-radius: 5px;
  background: #7ea3cc;
}

.glass .g-blue {
  width: 30px;
  margin-left: 50px;
  border-radius: 14px;
  background: #7893ad;
}

.glass .g-leaf {
  width: 28px;
  margin-left: 46px;
  background: linear-gradient(110deg, #8fb7cf 40%, #3f7a32);
}

.glass .g-title {
  width: 196px;
  margin-left: 328px;
  background: linear-gradient(90deg, #222c36 10%, #5a6f86 14%, #46586c 50%, #4a5e74);
}

.win-buttons {
  display: flex;
  align-self: flex-start;
  border: 1px solid #d0d6dc;
  border-top: 0;
  border-radius: 0 0 5px 5px;
  overflow: hidden;
}

.win-buttons button {
  width: 27px;
  height: 17px;
  border-right: 1px solid #b8c0c8;
  background: linear-gradient(#7d8890, #3c4650 50%, #5c6873);
}

.win-buttons .close {
  width: 48px;
  border-right: 0;
  background: linear-gradient(#d89a8c, #b83a24 50%, #c6482c);
}

.win-buttons svg {
  width: 12px;
  height: 10px;
}

/* Menu */
.menubar {
  display: flex;
  align-items: center;
  gap: 18px;
  flex: none;
  height: 24px;
  padding: 0 9px 0 14px;
  background: linear-gradient(90deg, #f1f1f1, #fdfdfd);
}

.doc-name {
  margin-left: auto;
  font-size: 12px;
}

.tabs {
  display: flex;
  align-items: flex-end;
  flex: none;
  height: 22px;
  border-bottom: 1px solid #999;
  color: #666;
  font-family: var(--song-font);
  font-size: 10px;
}

.tabs a {
  height: 22px;
  padding: 0 14px 0 9px;
  line-height: 25px;
}

.tabs .active {
  margin: 0 1px -1px -1px;
  padding: 0 10px;
  border: 1px solid #999;
  border-bottom: 0;
  border-radius: 6px 6px 0 0;
  background: linear-gradient(#fff 50%, #dcdcdc);
  color: #000;
  line-height: 19px;
}

/* Ribbon */
.ribbon {
  display: flex;
  gap: 4px;
  flex: none;
  height: 85px;
  padding: 3px 1px 8px;
  border-right: 1px solid #aaa;
  border-bottom: 2px solid #808080;
  border-radius: 0 6px 0 0;
  background: linear-gradient(#d6d6d6, #f1f1f1);
}

.panel {
  display: flex;
  flex-direction: column;
  border: 1px solid #999;
  border-radius: 5px;
  overflow: hidden;
  background: linear-gradient(#d2d2d2, #ededed);
}

.panel-icons {
  display: grid;
  grid-template-rows: repeat(2, 28px);
  grid-auto-columns: 28px;
  padding: 1px 1px 0;
}

.panel-icons button {
  width: 28px;
  height: 28px;
}

.panel-icons svg {
  display: block;
  width: 24px;
  height: 24px;
  margin: 2px;
  filter: drop-shadow(1px 1px 1px rgba(0, 0, 0, 0.4));
}

.panel h2 {
  display: flex;
  flex: 1;
  align-items: center;
  justify-content: center;
  background: linear-gradient(#3a3a3a, #111);
  color: #eee;
  font-family: var(--serif-font);
  font-size: 11px;
  font-weight: normal;
  line-height: 12px;
}

.panel h2 span {
  flex: 1;
  text-align: center;
}

.panel h2::after {
  content: "";
  align-self: flex-end;
  margin: 0 3px 3px 0;
  border: 3px solid transparent;
  border-top: 4px solid #999;
  border-bottom: 0;
}

/* Toolbar */
.toolbar {
  display: flex;
  align-items: center;
  gap: 1px;
  flex: none;
  height: 28px;
  padding-left: 2px;
  border-bottom: 1px solid #fff;
}

.toolbar button {
  display: flex;
  align-items: center;
  width: 23px;
}

.toolbar svg {
  flex: none;
  width: 21px;
  height: 21px;
  margin: 0 1px;
}

.toolbar .drop {
  width: 35px;
}

.toolbar .drop::after,
.zoom::after {
  content: "";
  margin-left: 1px;
  border: 3px solid transparent;
  border-top: 4px solid #111;
  border-bottom: 0;
}

.sep {
  width: 1px;
  height: 22px;
  margin: 0 2px;
  background: #888;
}

.zoom {
  display: flex;
  align-items: center;
  height: 26px;
  margin: 0 4px 0 2px;
}

.zoom select {
  width: 50px;
  height: 26px;
  padding-left: 4px;
  border: 0;
  background: #fff;
  appearance: none;
  font-family: var(--ui-font);
  font-size: 12px;
}

/* Canvas */
.canvas {
  position: relative;
  flex: 1;
  min-height: 0;
  overflow: hidden;
  margin-right: 2px;
  background-color: var(--canvas-color);
  background-image:
    linear-gradient(90deg, #b7b2a9 1px, transparent 1px),
    linear-gradient(#bcb7ae 1px, transparent 1px);
  background-size: 120px 120px, 40px 40px;
  background-position: 105px 0, 0 11px;
}

.wires {
  position: absolute;
  inset: 0;
  width: 100%;
  height: 100%;
}

.wires path {
  fill: none;
  stroke: #5d5a55;
  stroke-width: 2;
}

.wires .double {
  stroke-width: 5;
}

.wires .gap {
  stroke: #c3beb6;
  stroke-width: 2;
}

.wires .selected {
  stroke: url(#wireGreen);
  stroke-width: 3;
}

/* Components */
.node {
  position: absolute;
  display: flex;
  align-items: stretch;
  justify-content: space-between;
  min-height: 22px;
  padding: 1px 5px;
  border: 1px solid #3a3a3a;
  border-radius: 3px;
  background: linear-gradient(#fcfcfc, #e4e4e4 8px, #cacaca);
  box-shadow: 1px 2px 2px rgba(0, 0, 0, 0.3);
  color: #222;
  font-family: "Open Sans", sans-serif;
  font-size: 10px;
}

.node.dark {
  background: linear-gradient(#d0d0dc, #a9a9b7 8px, #8e8e9c);
}

.node.green {
  border-color: #1f5a08;
  background: linear-gradient(#c4fb8c, #9cf04c 8px, #80d630);
  color: #1c3a10;
}

.node ul {
  display: flex;
  flex-direction: column;
  min-width: 8px;
  list-style: none;
  text-align: center;
}

.node.green ul {
  text-align: right;
}

.node.starred .ins {
  padding-left: 15px;
}

.node li {
  display: flex;
  flex-direction: column;
  justify-content: center;
  flex: 1;
  min-height: 16px;
  line-height: 14px;
}

.node .icon {
  flex: none;
  align-self: center;
  width: 17px;
  height: 17px;
}

.port {
  position: absolute;
  width: 5px;
  height: 8px;
  border: 2px solid #111;
  background: #fff;
}

.ins .port {
  left: -5px;
  border-right: 0;
  border-radius: 5px 0 0 5px;
}

.outs .port {
  right: -5px;
  border-left: 0;
  border-radius: 0 5px 5px 0;
}

.star {
  position: absolute;
  left: 2px;
  width: 11px;
  height: 11px;
  border: 1px solid #444;
  border-radius: 2px;
  background: #e6e6ea;
  font-size: 14px;
  line-height: 16px;
  text-align: center;
}

/* Sliders */
.slider {
  position: absolute;
  display: flex;
  height: 17px;
}

.slider label {
  width: 35px;
  border: 1px solid #4a4a52;
  border-radius: 3px;
  background: linear-gradient(#c4c4d0, #9191a0);
  color: #6a6a7c;
  font-family: "Open Sans", sans-serif;
  font-size: 9px;
  line-height: 14px;
  text-align: center;
}

.slider-body {
  position: relative;
  display: flex;
  align-items: center;
  width: 97px;
  padding: 0 3px;
  border: 1px solid #444;
  border-radius: 3px;
  background: linear-gradient(#fff, #e8e8e8 50%, #cfcfcf);
  box-shadow: 1px 2px 2px rgba(0, 0, 0, 0.25);
}

.slider input {
  width: 100%;
  height: 7px;
  appearance: none;
  background:
    repeating-linear-gradient(90deg, #c4c4c4 0, #c4c4c4 1px, transparent 1px, transparent 16px) 3px 0 / 81px 4px no-repeat,
    linear-gradient(#c4c4c4, #c4c4c4) 3px 3px / 81px 1px no-repeat;
}

.slider input::-webkit-slider-thumb {
  appearance: none;
  width: 7px;
  height: 7px;
  border: 2px solid #111;
  border-radius: 50%;
  background: #fff;
}

.slider.whole input::-webkit-slider-thumb {
  width: 5px;
  height: 5px;
  border-width: 1px;
  border-radius: 0;
  transform: rotate(45deg);
}

.slider output {
  position: absolute;
  top: 0;
  color: #555;
  font-family: var(--serif-font);
  font-size: 11px;
  line-height: 14px;
  pointer-events: none;
}

/* Recent components and compass */
.recent {
  position: absolute;
  left: 0;
  bottom: 0;
  display: flex;
  align-items: center;
  height: 28px;
  padding: 0 6px 0 0;
  border: 1px solid #111;
  border-left: 0;
  background: linear-gradient(90deg, transparent 112px, #777 112px), linear-gradient(#eee, #a8a8a8);
}

.recent button {
  width: 28px;
  height: 24px;
}

.recent svg {
  width: 20px;
  height: 20px;
}

.compass {
  position: absolute;
  right: 3px;
  bottom: 2px;
  width: 60px;
  height: 60px;
}

/* Status Bar */
.statusbar {
  display: flex;
  align-items: center;
  gap: 3px;
  flex: none;
  height: 25px;
  padding: 0 4px 0 1px;
  border-top: 2px solid #fff;
  background: linear-gradient(90deg, #f0f0f0, #fdfdfd);
}

.statusbar svg {
  width: 16px;
  height: 16px;
}

.version {
  margin-left: auto;
  color: #777;
}

.grip {
  align-self: flex-end;
  width: 10px;
  height: 10px;
  background: radial-gradient(#888 1px, transparent 1px) 0 0 / 4px 4px;
}

/* Lyrics */
.lyric {
  position: absolute;
  z-index: 5;
  display: flex;
  gap: 24px;
  font-family: "Noto Sans CJK SC", sans-serif;
  font-size: 39px;
  font-weight: bold;
  line-height: 44px;
  white-space: nowrap;
  filter: drop-shadow(0 0 1px #123a66);
}

.lyric span,
.lyric b {
  background: linear-gradient(#1d4482 10%, #1677bd 50%, #1fb6e6 95%);
  background-clip: text;
  -webkit-background-clip: text;
  color: transparent;
}

.lyric .sung {
  background-image: linear-gradient(#8fe8f2 10%, #f4ffff 45%, #35d6e2 95%);
}

.lyric-one {
  right: 583px;
  bottom: 69px;
  filter: drop-shadow(0 0 1px #123a66) drop-shadow(0 0 1px #1d4c70);
}

.lyric-two {
  right: 132px;
  bottom: 17px;
}

.lyric .mic {
  width: 18px;
  height: 28px;
  margin: 2px 0 0 -16px;
  background: linear-gradient(#9ab0d4, #fff 30%, #ccc);
  clip-path: polygon(35% 0, 100% 0, 70% 100%, 0 100%);
}

/* Corner Badge */
.badge {
  position: absolute;
  z-index: 6;
  top: 0;
  left: 0;
  width: 89px;
  height: 69px;
  background: linear-gradient(135deg, #e0281f, #b80f0f);
  clip-path: polygon(0 0, 100% 0, 0 100%);
}

.badge p {
  width: 90px;
  margin: 12px 0 0 -17px;
  transform: rotate(-38deg);
  color: #f4dada;
  font-size: 12px;
  line-height: 14px;
  text-align: center;
}

.badge span {
  color: #f5e11c;
  font-weight: bold;
}

/* Taskbar */
.taskbar {
  display: flex;
  align-items: center;
  flex: none;
  height: 39px;
  border-top: 1px solid #6c7680;
  background: linear-gradient(90deg, #1a2026, #222c36 20%, #222b35 42%, #1a1f26 60%, #181d23);
  color: #fff;
}

.start {
  width: 54px;
  height: 38px;
}

.start svg {
  width: 38px;
  height: 38px;
}

.dots {
  flex: none;
  width: 8px;
  height: 30px;
  margin: 0 4px;
  background: radial-gradient(#58626c 1px, transparent 1px) 0 0 / 4px 4px;
}

.dots.push {
  margin-left: auto;
}

.task {
  width: 58px;
  height: 38px;
  margin-right: 4px;
  border: 1px solid #8a949c;
  border-radius: 3px;
  background: linear-gradient(120deg, #7c8790, #39434d 50%, #434e58);
}

.task svg {
  display: block;
  width: 32px;
  height: 32px;
  margin: auto;
}

.task.plain {
  width: 68px;
  margin: 0;
  border-color: transparent;
  background: none;
}

.task.stacked {
  width: 54px;
  margin-right: 8px;
  box-shadow: 3px 0 0 -1px #1a2026, 4px 0 0 -1px #8a949c;
}

.task.current {
  background: linear-gradient(120deg, #e4e8ea, #8b949c 50%, #a9b1b8);
}

.addr-label {
  margin-right: 5px;
  font-size: 12px;
}

.address {
  display: flex;
  align-items: center;
  width: 899px;
  max-width: 47%;
  height: 24px;
  margin-right: 8px;
  border: 1px solid #8a949c;
  background: #fff;
}

.address > svg {
  width: 16px;
  height: 16px;
  margin: 0 4px;
}

.address input {
  flex: 1;
  min-width: 0;
  border: 0;
  font-family: "Open Sans", sans-serif;
  font-size: 12px;
}

.caret::after {
  content: "";
  display: block;
  border: 4px solid transparent;
  border-top: 5px solid #111;
  border-bottom: 0;
}

.go {
  width: 25px;
  height: 22px;
  margin-left: 6px;
  border-left: 1px solid #999;
}

.go svg {
  width: 20px;
  height: 20px;
}

.tray {
  display: flex;
  gap: 8px;
  padding-left: 3px;
  margin-right: 4px;
}

.tray svg {
  width: 16px;
  height: 16px;
}

.tray svg:first-child {
  margin-right: 12px;
}

.clock {
  width: 78px;
  font-size: 12px;
  line-height: 18px;
  text-align: center;
}

.show-desktop {
  width: 14px;
  height: 38px;
  border: 1px solid #6c7680;
  background: linear-gradient(120deg, #5c666e, #1c2228 60%);
}
```
FILE: script.js
```js
// Ribbon panels: title and icons per row
const panels = [
  ['Generate', [['gen1', 'gen2'], ['gen3', 'gen4']]],
  ['Math', [['math1', 'math2', 'math3'], ['math4', 'math5', 'math6']]],
  ['Panels', [['pan1', 'pan2', 'pan3', 'pan4', 'pan5'], ['pan6', 'pan7', 'pan8', 'pan9']]],
  ['Structure', [['str1', 'str2', 'str3'], ['str4', 'str5', 'str6']]],
  ['Util', [['utl1', 'utl2'], ['utl3', 'utl4']]],
  ['Workflow', [['wf1', 'wf2', 'wf3'], ['wf4', 'wf5', 'wf6']]]
];

document.getElementById('ribbon').innerHTML = panels.map(([title, rows]) => {
  const icons = rows.map((row, r) => row.map((id, c) =>
    `<button type="button" aria-label="${title} ${id}" style="grid-area:${r + 1}/${c + 1}"><svg><use href="#i-${id}"/></svg></button>`
  ).join('')).join('');
  return `<section class="panel"><div class="panel-icons">${icons}</div><h2><span>${title}</span></h2></section>`;
}).join('');

// id, x, y, width, icon, inputs, outputs, class ("*" marks a flagged input)
const nodes = [
  ['torus', 80, 47, 62, 'torus', 'U V R T S D1 D2', 'Srf', 'green'],
  ['brep', 302, 74, 51, 'brep', 'B', 'F E V', 'dark'],
  ['disp', 423, 89, 51, 'dispatch', 'L P', 'A B', 'dark'],
  ['join', 499, 86, 50, 'join', 'C P', 'C', ''],
  ['perp', 576, 92, 51, 'frames', 'C N A', 'F t', 'dark'],
  ['pi', 700, 24, 51, 'pi', 'N', 'y', 'dark'],
  ['range', 781, 25, 64, 'range', 'D *N', 'R', 'dark'],
  ['plane', 704, 93, 52, 'plane', 'P D', 'P A', 'dark'],
  ['z1', 619, 160, 50, 'zvec', 'F', 'V', 'dark'],
  ['rot1', 892, 99, 52, 'rotate', 'G A P', 'G X', 'dark'],
  ['item', 965, 47, 52, 'item', 'L i W', 'E', 'dark'],
  ['rot2', 1073, 49, 52, 'rotate', 'G A P', 'G X', 'dark'],
  ['dom1', 882, 174, 61, 'domain', 'A *B', 'I', 'dark'],
  ['dom2', 882, 213, 61, 'domain', 'A *B', 'I', 'dark'],
  ['dom3', 1017, 258, 61, 'domain', 'A *B', 'I', 'dark'],
  ['dom4', 1018, 309, 61, 'domain', 'A *B', 'I', 'dark'],
  ['rect1', 1107, 158, 51, 'rect', 'P X Y R', 'R L', 'dark'],
  ['rect2', 1221, 249, 51, 'rect', 'P X Y R', 'R L', 'dark'],
  ['loft1', 1316, 167, 52, 'loft', 'S O', 'L', ''],
  ['loft2', 1321, 253, 52, 'loft', 'S O', 'L', ''],
  ['brep2', 1448, 156, 51, 'brep', 'B', 'F E V', ''],
  ['disp2', 1549, 168, 52, 'dispatch', 'L P', 'A B', ''],
  ['bound', 572, 326, 49, 'bound', 'E', 'S', ''],
  ['circ1', 474, 365, 51, 'circle', 'P R', 'C', ''],
  ['ext', 591, 385, 50, 'extr', 'B D', 'E', ''],
  ['z2', 472, 433, 50, 'zvec', 'F', 'V', 'dark'],
  ['divide', 515, 477, 52, 'divide', 'C N K', 'P T t', ''],
  ['scale', 637, 446, 52, 'scale', 'G C F', 'G X', ''],
  ['move1', 638, 513, 52, 'move', 'G T', 'G X', ''],
  ['line', 735, 487, 50, 'line', 'A B', 'L', ''],
  ['pipe1', 857, 490, 50, 'pipe', 'C R E', 'S', ''],
  ['move2', 597, 577, 52, 'move', 'G T', 'G X', ''],
  ['circ2', 327, 576, 51, 'circle', 'P R', 'C', ''],
  ['pipe2', 438, 576, 50, 'pipe', 'C R E', 'S', ''],
  ['z3', 464, 683, 50, 'zvec', 'F', 'V', 'dark']
];

// id, x, y, value, knob position in px
const sliders = [
  ['s1', 537, 17, '0', 8],
  ['s2', 340, 208, '100', 87],
  ['s3', 680, 200, '3.000', 32],
  ['s4', 681, 232, '3.000', 33],
  ['s5', 835, 291, '2.934', 32],
  ['s6', 835, 337, '2.541', 29],
  ['s7', 167, 381, '116.500', 38],
  ['s8', 224, 456, '15.250', 32],
  ['s9', 199, 532, '50', 87],
  ['s10', 81, 600, '40.500', 73],
  ['s11', 236, 646, '0.144', 12],
  ['s12', 235, 707, '1.382', 44],
  ['s13', 521, 726, '0.053', 12]
];

// from, output index, to, input index, kind
const wires = [
  ['torus', 0, 'brep', 0, 'selected'],
  ['brep', 1, 'disp', 0, 'double'],
  ['disp', 0, 'join', 0, 'double'],
  ['join', 0, 'perp', 0],
  ['s2', 0, 'perp', 1],
  ['s2', 0, 'range', 1],
  ['perp', 0, 'plane', 0, 'double'],
  ['perp', 0, 'rot1', 2, 'double'],
  ['plane', 0, 'rot1', 0, 'double'],
  ['z1', 0, 'plane', 1],
  ['s1', 0, 'pi', 0],
  ['pi', 0, 'range', 0],
  ['range', 0, 'rot1', 1, 'double'],
  ['rot1', 0, 'item', 0, 'double'],
  ['rot1', 0, 'rect1', 0, 'double'],
  ['item', 0, 'rot2', 0],
  ['item', 0, 'rot2', 1],
  ['item', 0, 'rot2', 2],
  ['rot2', 0, 'rect1', 0],
  ['s3', 0, 'dom1', 0],
  ['s3', 0, 'dom1', 1],
  ['s4', 0, 'dom2', 0],
  ['s4', 0, 'dom2', 1],
  ['s5', 0, 'dom3', 0],
  ['s5', 0, 'dom3', 1],
  ['s6', 0, 'dom4', 0],
  ['s6', 0, 'dom4', 1],
  ['dom1', 0, 'rect1', 1],
  ['dom2', 0, 'rect1', 2],
  ['dom3', 0, 'rect2', 1],
  ['dom4', 0, 'rect2', 2],
  ['rect1', 0, 'loft1', 0, 'double'],
  ['rect1', 0, 'rect2', 0, 'double'],
  ['rect2', 0, 'loft2', 0, 'double'],
  ['loft1', 0, 'brep2', 0],
  ['brep2', 0, 'disp2', 0, 'double'],
  ['s7', 0, 'circ1', 1],
  ['circ1', 0, 'bound', 0],
  ['circ1', 0, 'ext', 0],
  ['s8', 0, 'z2', 0],
  ['z2', 0, 'ext', 1],
  ['s9', 0, 'divide', 1],
  ['s10', 0, 'circ2', 1],
  ['circ2', 0, 'divide', 0],
  ['circ2', 0, 'pipe2', 0],
  ['s11', 0, 'pipe2', 1],
  ['pipe2', 0, 'move2', 0],
  ['s12', 0, 'z3', 0],
  ['z3', 0, 'move2', 1],
  ['z3', 0, 'move1', 1],
  ['divide', 0, 'scale', 0, 'double'],
  ['divide', 0, 'move1', 0, 'double'],
  ['scale', 0, 'line', 0, 'double'],
  ['move1', 0, 'line', 1, 'double'],
  ['line', 0, 'pipe1', 0, 'double'],
  ['s13', 0, 'pipe1', 1]
];

const canvas = document.getElementById('canvas');
const wireLayer = document.getElementById('wires');

function portList(names, side) {
  const items = names.split(' ').map(name => {
    const star = name[0] === '*';
    return `<li>${star ? '<span class="star">*</span>' : ''}<i class="port"></i>${name.replace('*', '')}</li>`;
  }).join('');
  return `<ul class="${side}">${items}</ul>`;
}

function addNode([id, x, y, width, icon, ins, outs, cls]) {
  const el = document.createElement('div');
  el.id = id;
  el.className = `node ${cls} ${ins.includes('*') ? 'starred' : ''}`;
  el.style.cssText = `left:${x}px;top:${y}px;width:${width}px`;
  el.innerHTML = portList(ins, 'ins') + `<svg class="icon"><use href="#n-${icon}"/></svg>` + portList(outs, 'outs');
  canvas.appendChild(el);
}

function addSlider([id, x, y, value, knob]) {
  const el = document.createElement('div');
  const side = knob > 60 ? `right:${102 - knob}px` : `left:${knob + 5}px`;
  el.id = id;
  el.className = `slider ${value.includes('.') ? '' : 'whole'}`;
  el.style.cssText = `left:${x}px;top:${y}px`;
  el.innerHTML = `<label for="${id}-in">Slider</label>
    <div class="slider-body outs">
      <input id="${id}-in" type="range" min="0" max="82" value="${knob - 8}">
      <output for="${id}-in" style="${side}">${value}</output>
      <i class="port"></i>
    </div>`;
  canvas.appendChild(el);
}

function portPoint(id, side, index) {
  const base = canvas.getBoundingClientRect();
  const box = document.querySelectorAll(`#${id} .${side} .port, #${id} .${side}.slider-body .port`)[index].getBoundingClientRect();
  const x = side === 'outs' ? box.right : box.left;
  return [x - base.left, box.top + box.height / 2 - base.top];
}

function curve([x1, y1], [x2, y2]) {
  let c = Math.max(Math.abs(x2 - x1), Math.abs(y2 - y1)) / 2;
  // wires that run backwards swing out wider
  if (x2 < x1) c *= 1.25;
  return `M${x1} ${y1}C${x1 + c} ${y1} ${x2 - c} ${y2} ${x2} ${y2}`;
}

nodes.forEach(addNode);
sliders.forEach(addSlider);

let paths = '<defs><linearGradient id="wireGreen"><stop offset="0" stop-color="#80cc3c"/><stop offset="1" stop-color="#9aa38c"/></linearGradient></defs>';
wires.forEach(([from, out, to, input, kind = '']) => {
  const d = curve(portPoint(from, 'outs', out), portPoint(to, 'ins', input));
  paths += `<path class="${kind}" d="${d}"/>`;
  if (kind === 'double') paths += `<path class="gap" d="${d}"/>`;
});
// range wire that runs behind the list item
paths += '<path d="M847 42C885 42 925 60 985 70"/>';
// scale factor comes from a slider below the visible area
paths += `<path d="${curve([643, 780], portPoint('scale', 'ins', 2))}"/>`;
wireLayer.innerHTML = paths;
```
